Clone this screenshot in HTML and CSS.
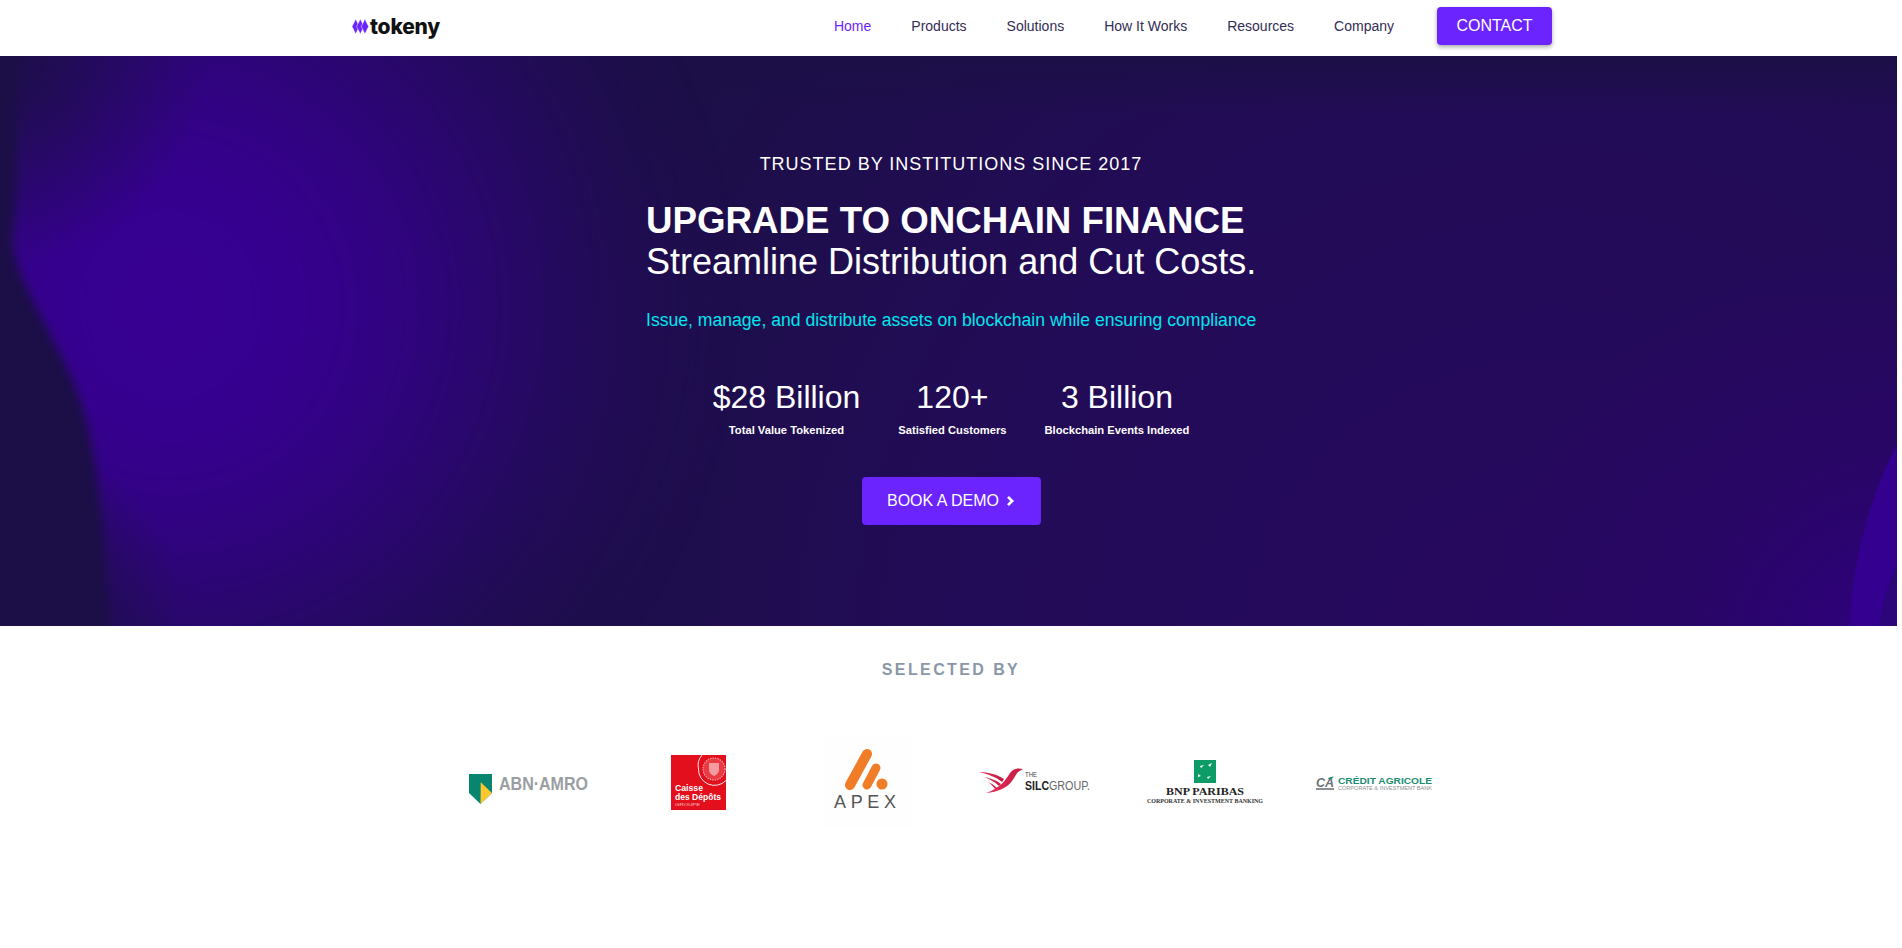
FILE: index.html
```html
<!DOCTYPE html>
<html lang="en">
<head>
<meta charset="utf-8">
<title>Tokeny</title>
<link rel="stylesheet" href="styles.css">
</head>
<body>
<header class="topbar">
  <div class="topbar-inner">
    <a class="brand" href="#">
      <svg class="brand-mark" width="17" height="15" viewBox="0 0 17 15"><g fill="#6c24ff" stroke="#fff" stroke-width=".5"><path d="M3.700 0 7.400 7.500 3.700 15 0 7.500z"/><path d="M8.300 0 12 7.500 8.300 15 4.600 7.500z"/><path d="M12.900 0 16.600 7.500 12.900 15 9.200 7.500z"/></g></svg>
      <span class="brand-name">tokeny</span>
    </a>
    <nav class="nav">
      <a class="nav-link active" href="#">Home</a>
      <a class="nav-link" href="#">Products</a>
      <a class="nav-link" href="#">Solutions</a>
      <a class="nav-link" href="#">How It Works</a>
      <a class="nav-link" href="#">Resources</a>
      <a class="nav-link" href="#">Company</a>
    </nav>
    <a class="contact" href="#">CONTACT</a>
  </div>
</header>

<section class="hero">
  <svg class="hero-bg" viewBox="0 0 1897 570" aria-hidden="true">
    <defs>
      <radialGradient id="glow" gradientUnits="userSpaceOnUse" cx="170" cy="250" r="570">
        <stop offset="0" stop-color="#370092"/>
        <stop offset=".1" stop-color="#370092" stop-opacity=".99"/>
        <stop offset=".2" stop-color="#370092" stop-opacity=".96"/>
        <stop offset=".3" stop-color="#370092" stop-opacity=".88"/>
        <stop offset=".4" stop-color="#370092" stop-opacity=".76"/>
        <stop offset=".5" stop-color="#370092" stop-opacity=".6"/>
        <stop offset=".6" stop-color="#370092" stop-opacity=".44"/>
        <stop offset=".7" stop-color="#370092" stop-opacity=".28"/>
        <stop offset=".8" stop-color="#370092" stop-opacity=".15"/>
        <stop offset=".9" stop-color="#370092" stop-opacity=".05"/>
        <stop offset="1" stop-color="#370092" stop-opacity="0"/>
      </radialGradient>
      <radialGradient id="topleft" gradientUnits="userSpaceOnUse" cx="0" cy="0" r="210">
        <stop offset="0" stop-color="#1c0f47"/>
        <stop offset=".3" stop-color="#1c0f47" stop-opacity=".7"/>
        <stop offset="1" stop-color="#1c0f47" stop-opacity="0"/>
      </radialGradient>
      <radialGradient id="lowerleft" gradientUnits="userSpaceOnUse" cx="0" cy="570" r="190">
        <stop offset="0" stop-color="#1c0f47"/>
        <stop offset=".45" stop-color="#1c0f47" stop-opacity=".7"/>
        <stop offset="1" stop-color="#1c0f47" stop-opacity="0"/>
      </radialGradient>
      <radialGradient id="field" gradientUnits="userSpaceOnUse" cx="1550" cy="620" r="1050">
        <stop offset="0" stop-color="#27085f"/>
        <stop offset=".6" stop-color="#220c56"/>
        <stop offset="1" stop-color="#1c0f47"/>
      </radialGradient>
      <radialGradient id="corner" gradientUnits="userSpaceOnUse" cx="1897" cy="600" r="420">
        <stop offset="0" stop-color="#300080"/>
        <stop offset=".5" stop-color="#280665"/>
        <stop offset="1" stop-color="#280665" stop-opacity="0"/>
      </radialGradient>
      <linearGradient id="topfade" x1="0" x2="0" y1="0" y2="1">
        <stop offset="0" stop-color="#1c0f47"/>
        <stop offset="1" stop-color="#1c0f47" stop-opacity="0"/>
      </linearGradient>
      <filter id="soft" x="-10%" y="-10%" width="120%" height="120%" color-interpolation-filters="sRGB"><feGaussianBlur stdDeviation="5"/></filter>
    </defs>
    <rect width="1897" height="570" fill="#1c0f47"/>
    <rect width="1897" height="570" fill="url(#field)"/>
    <rect width="1897" height="570" fill="url(#corner)"/>
    <rect width="1897" height="60" fill="url(#topfade)"/>
    <path d="M15-30C16 60 20 130 12 178 12 220 50 270 75 330 95 380 105 450 110 620H900V-30z" fill="url(#glow)" filter="url(#soft)"/>
    <rect width="210" height="210" fill="url(#topleft)"/>
    <rect y="380" width="190" height="190" fill="url(#lowerleft)"/>
    <path d="M1897 388C1870 440 1852 505 1850 570h47z" fill="#34008f"/>
    <path d="M1897 510C1888 525 1882 548 1880 570h17z" fill="#2c0578"/>
  </svg>
  <div class="hero-content">
    <p class="eyebrow">TRUSTED BY INSTITUTIONS SINCE 2017</p>
    <div class="headline">
      <h1 class="title">UPGRADE TO ONCHAIN FINANCE</h1>
      <h2 class="subtitle">Streamline Distribution and Cut Costs.</h2>
      <p class="lede">Issue, manage, and distribute assets on blockchain while ensuring compliance</p>
    </div>
    <div class="stats">
      <div class="stat"><div class="stat-value">$28 Billion</div><div class="stat-label">Total Value Tokenized</div></div>
      <div class="stat"><div class="stat-value">120+</div><div class="stat-label">Satisfied Customers</div></div>
      <div class="stat"><div class="stat-value">3 Billion</div><div class="stat-label">Blockchain Events Indexed</div></div>
    </div>
    <a class="demo" href="#">BOOK A DEMO
      <svg width="10" height="12" viewBox="0 0 10 12"><path d="M3 1.800 7.200 6 3 10.200" fill="none" stroke="#fff" stroke-width="2.600"/></svg>
    </a>
  </div>
</section>

<section class="selected">
  <h3 class="selected-title">SELECTED BY</h3>
  <div class="logos">
    <svg class="logo" viewBox="0 0 169 92">
      <path d="M25 38h23v19L36.500 68 25 57z" fill="#07856f"/>
      <path d="M36.700 46.300 48 57 36.500 68z" fill="#fdc82f"/>
      <text class="t-abn" x="55" y="54" textLength="89" lengthAdjust="spacingAndGlyphs">ABN·AMRO</text>
    </svg>
    <svg class="logo" viewBox="0 0 169 92">
      <g transform="translate(58 19)">
        <rect width="55" height="55" fill="#e30f1c"/>
        <path d="M27.500 14A16 16 0 0 0 55 25.500M31 0A16 16 0 0 0 27.500 14" fill="none" stroke="#fff" stroke-width=".9"/>
        <circle cx="43" cy="14" r="11" fill="#ea3a44" stroke="#f6a0a4" stroke-width="1.200" stroke-dasharray="1.500 1"/>
        <path d="M38 8h10v7c0 3-2.500 5-5 6-2.500-1-5-3-5-6z" fill="#f29ba0"/>
        <text class="t-cdc" x="4" y="36" textLength="28" lengthAdjust="spacingAndGlyphs">Caisse</text>
        <text class="t-cdc" x="4" y="45" textLength="46" lengthAdjust="spacingAndGlyphs">des Dépôts</text>
        <text class="t-cdc-s" x="4" y="51" textLength="25" lengthAdjust="spacingAndGlyphs">GROUPE</text>
      </g>
    </svg>
    <svg class="logo" viewBox="0 0 169 92">
      <rect x="41" y="1" width="90" height="90" fill="#fefefe"/>
      <g transform="translate(50 13)">
        <g fill="none" stroke="#f07c28" stroke-linecap="round"><path d="M35 5 18 36" stroke-width="10"/><path d="M44 19 35 36" stroke-width="9"/></g>
        <circle cx="50" cy="35" r="5.500" fill="#f07c28"/>
        <text class="t-apex" x="2" y="59" textLength="62">APEX</text>
      </g>
    </svg>
    <svg class="logo" viewBox="0 0 169 92">
      <defs>
        <linearGradient id="bird" x1="0" x2="1" y1="0" y2="0"><stop offset="0" stop-color="#e8305f"/><stop offset="1" stop-color="#c41a3e"/></linearGradient>
      </defs>
      <g transform="translate(28 32)">
        <path d="M44 1C38-.5 34 1 31 5 27 11 22 20 7 25c12-1 21-5 26-12 3-4 4-7 6-9z" fill="url(#bird)"/>
        <path d="M0 4c9 0 17 2 25 7-1 1-1 2-2 3C17 9 9 6 0 4zM5 9c6 1 12 3 17 7l-2 2C15 13 10 11 5 9zM9 14c3 1 6 3 9 6l-2 1c-2-3-4-5-7-7z" fill="url(#bird)"/>
        <text class="t-silc-s" x="46" y="9" textLength="12" lengthAdjust="spacingAndGlyphs">THE</text>
        <text class="t-silc-b" x="46" y="22" textLength="24" lengthAdjust="spacingAndGlyphs">SILC</text>
        <text class="t-silc" x="70" y="22" textLength="41" lengthAdjust="spacingAndGlyphs">GROUP.</text>
      </g>
    </svg>
    <svg class="logo" viewBox="0 0 169 92">
      <rect x="74" y="24" width="22" height="23" fill="#0d9b68"/>
      <path d="M88 29l4-2-2 4zM80 30l4-1-3 3zM78 38l3 2-3 1zM87 41l4-1-3 3z" fill="#fff"/>
      <text class="t-bnp" x="46" y="59" textLength="78" lengthAdjust="spacingAndGlyphs">BNP PARIBAS</text>
      <text class="t-bnp-s" x="27" y="67" textLength="116" lengthAdjust="spacingAndGlyphs">CORPORATE &amp; INVESTMENT BANKING</text>
    </svg>
    <svg class="logo" viewBox="0 0 169 92">
      <text class="t-ca-m" x="27" y="51" textLength="18" lengthAdjust="spacingAndGlyphs">CA</text>
      <path d="M39 42c2-1 4-1.500 6-1.500-1 1.500-3 2.500-5 3z" fill="#1a8d6f"/>
      <rect x="27" y="52" width="18" height="2" fill="#8a8f92"/>
      <text class="t-ca" x="49" y="48" textLength="94" lengthAdjust="spacingAndGlyphs">CRÉDIT AGRICOLE</text>
      <text class="t-ca-s" x="49" y="54" textLength="94" lengthAdjust="spacingAndGlyphs">CORPORATE &amp; INVESTMENT BANK</text>
    </svg>
  </div>
</section>
</body>
</html>
```
FILE: styles.css
```css
* { box-sizing: border-box; }
html, body { margin: 0; padding: 0; background: #fff; }
body { font-family: "Liberation Sans", Arial, sans-serif; overflow: hidden; height: 948px; }
a { text-decoration: none; color: inherit; }
p, h1, h2, h3 { margin: 0; }

.topbar { height: 56px; background: #fff; padding-bottom: 4px; }
.topbar-inner { width: 1202px; margin: 0 auto; height: 100%; display: flex; align-items: center; }
.brand { display: flex; align-items: center; gap: 1px; margin-left: 2px; }
.brand-name { font: 800 21px/1 Inter, sans-serif; color: #111; letter-spacing: -.2px; }
.nav { display: flex; gap: 40px; margin-left: auto; font-size: 14px; color: #332c55; }
.nav-link.active { color: #6c24ff; }
.contact { margin-left: 43px; width: 115px; height: 38px; display: flex; align-items: center; justify-content: center; background: #6c24ff; color: #fff; font-size: 16px; border-radius: 4px; box-shadow: 0 2px 4px rgba(0,0,0,.35); }

.hero { position: relative; height: 570px; overflow: hidden; color: #fff; }
.hero-bg { position: absolute; top: 0; left: 0; width: 1897px; height: 570px; display: block; }
.hero-content { position: relative; display: flex; flex-direction: column; align-items: center; padding-top: 97px; }
.eyebrow { font-size: 18px; line-height: 22px; letter-spacing: 1px; }
.headline { margin-top: 26px; width: 610px; }
.title { font-size: 36.700px; line-height: 40px; font-weight: 700; white-space: nowrap; }
.subtitle { font-size: 36px; line-height: 41px; font-weight: 400; white-space: nowrap; }
.lede { margin-top: 26px; font-size: 17.600px; line-height: 24px; color: #00e5ee; white-space: nowrap; }
.stats { display: flex; gap: 38px; margin-top: 45px; }
.stat { text-align: center; }
.stat-value { font-size: 32px; line-height: 40px; }
.stat-label { font-size: 11.200px; line-height: 16px; font-weight: 700; margin-top: 5px; }
.demo { margin-top: 39px; width: 179px; height: 48px; display: flex; align-items: center; justify-content: center; gap: 6px; background: #6c24ff; border-radius: 4px; font-size: 16px; }

.selected { height: 322px; text-align: center; }
.selected-title { padding-top: 34px; font-size: 16px; line-height: 20px; font-weight: 700; letter-spacing: 2.400px; color: #8a97a8; }
.logos { width: 1014px; margin: 56px auto 0; display: grid; grid-template-columns: repeat(6, 169px); }
.logo { display: block; width: 169px; height: 92px; }
.t-abn { font: 700 18px "Liberation Sans", sans-serif; fill: #9a9ea2; }
.t-cdc { font: 700 9px "Liberation Sans", sans-serif; fill: #fff; }
.t-cdc-s { font: 400 4px "Liberation Sans", sans-serif; fill: #f9c9cc; }
.t-apex { font: 400 18px "Liberation Sans", sans-serif; fill: #555; }
.t-silc-s { font: 400 7px "Liberation Sans", sans-serif; fill: #444; }
.t-silc-b { font: 700 12px "Liberation Sans", sans-serif; fill: #222; }
.t-silc { font: 400 12px "Liberation Sans", sans-serif; fill: #666; }
.t-bnp { font: 700 11px "Liberation Serif", serif; fill: #222; }
.t-bnp-s { font: 700 5.500px "Liberation Serif", serif; fill: #333; }
.t-ca-m { font: italic 700 12px "Liberation Sans", sans-serif; fill: #6a6f72; }
.t-ca { font: 700 9px "Liberation Sans", sans-serif; fill: #1a8d6f; }
.t-ca-s { font: 400 4.500px "Liberation Sans", sans-serif; fill: #8a8f92; }
```
